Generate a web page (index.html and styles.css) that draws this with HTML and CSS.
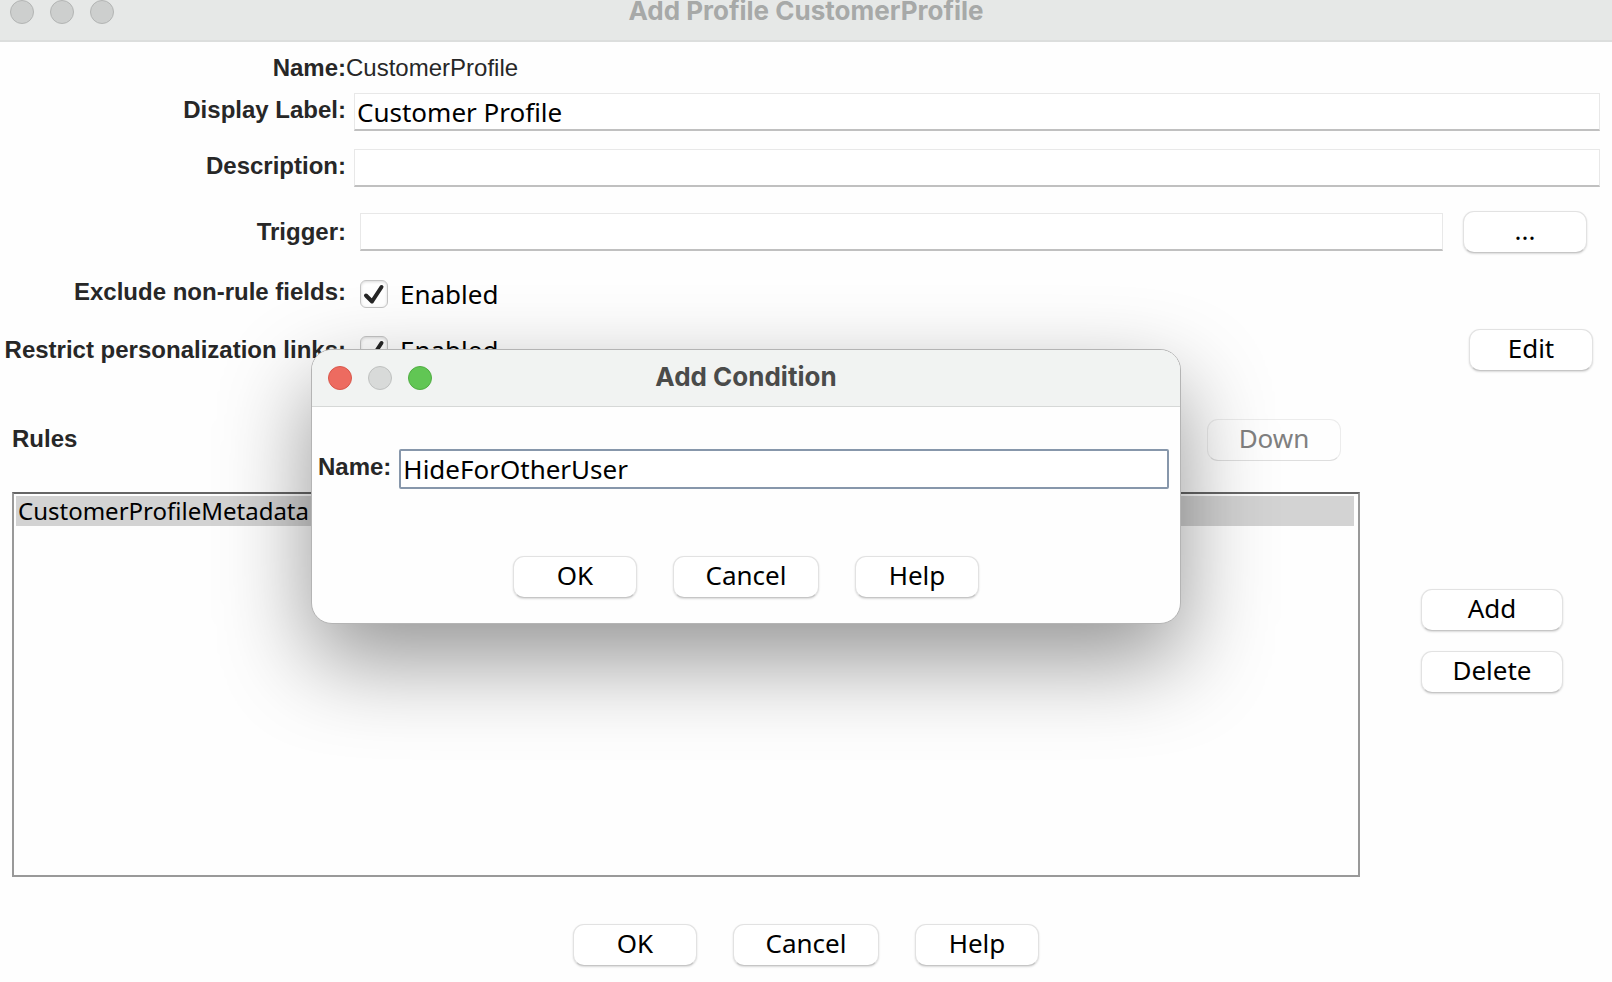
FILE: index.html
```html
<!DOCTYPE html>
<html lang="en">
<head>
<meta charset="utf-8">
<title>Add Profile CustomerProfile</title>
<link rel="stylesheet" href="styles.css">
</head>
<body>
<div class="window">
  <header class="titlebar titlebar-main">
    <div class="lights"><span class="light"></span><span class="light"></span><span class="light"></span></div>
    <h1 class="title">Add Profile CustomerProfile</h1>
  </header>

  <main class="content">
    <div class="row row-name">
      <span class="label">Name:</span><span class="value">CustomerProfile</span>
    </div>
    <div class="row row-display">
      <label class="label raised" for="display">Display Label:</label>
      <input class="field" id="display" type="text" value="Customer Profile">
    </div>
    <div class="row row-description">
      <label class="label raised" for="description">Description:</label>
      <input class="field" id="description" type="text">
    </div>
    <div class="row row-trigger">
      <label class="label" for="trigger">Trigger:</label>
      <input class="field" id="trigger" type="text">
      <button class="button" type="button">...</button>
    </div>
    <div class="row row-exclude">
      <span class="label raised">Exclude non-rule fields:</span>
      <label class="check"><span class="box"><input type="checkbox" checked><svg class="tick" viewBox="0 0 28 28"><path d="M6 15.500L12 21.500L21.500 7"/></svg></span>Enabled</label>
    </div>
    <div class="row row-restrict">
      <span class="label">Restrict personalization links:</span>
      <label class="check"><span class="box"><input type="checkbox" checked><svg class="tick" viewBox="0 0 28 28"><path d="M6 15.500L12 21.500L21.500 7"/></svg></span>Enabled</label>
      <button class="button push" type="button">Edit</button>
    </div>

    <div class="rules-head">
      <h2 class="rules-title">Rules</h2>
      <button class="button down" type="button" disabled>Down</button>
    </div>
    <div class="rules">
      <ul class="list"><li class="item">CustomerProfileMetadata</li></ul>
      <div class="side">
        <button class="button wide" type="button">Add</button>
        <button class="button wide" type="button">Delete</button>
      </div>
    </div>
    <div class="actions">
      <button class="button" type="button">OK</button>
      <button class="button wide" type="button">Cancel</button>
      <button class="button" type="button">Help</button>
    </div>
  </main>

  <section class="dialog" role="dialog" aria-labelledby="dialog-title">
    <header class="titlebar titlebar-dialog">
      <div class="lights"><span class="light light-close"></span><span class="light light-off"></span><span class="light light-zoom"></span></div>
      <h2 class="title" id="dialog-title">Add Condition</h2>
    </header>
    <div class="dialog-body">
      <div class="dialog-row">
        <label class="dialog-label" for="condition">Name:</label>
        <input class="field field-focus" id="condition" type="text" value="HideForOtherUser">
      </div>
      <div class="actions">
        <button class="button" type="button">OK</button>
        <button class="button wide" type="button">Cancel</button>
        <button class="button" type="button">Help</button>
      </div>
    </div>
  </section>
</div>
</body>
</html>
```

FILE: styles.css
```css
* { box-sizing: border-box; }

body {
  margin: 0;
  background: #fefefe;
  color: #000;
  font-family: "Noto Sans", sans-serif;
  font-size: 26px;
}

.window {
  position: relative;
  display: flex;
  flex-direction: column;
  min-height: 100vh;
}

/* Title bars */
.titlebar {
  display: grid;
  grid-template-columns: 1fr auto 1fr;
}

.titlebar-main {
  height: 42px;
  padding: 0 10px;
  border-bottom: 2px solid #dcdedd;
  background: #e6e8e7;
  color: #a7a9a8;
}

.titlebar-dialog {
  align-items: center;
  height: 57px;
  padding: 0 16px;
  border-bottom: 1px solid #d6d8d7;
  border-radius: 20px 20px 0 0;
  background: #f1f3f2;
  color: #4a4b4a;
}

.title {
  margin: 0;
  font-family: Inter, sans-serif;
  font-size: 26px;
  font-weight: 700;
  line-height: 22px;
}

.titlebar-dialog .title { padding-bottom: 2px; }

.lights {
  display: flex;
  gap: 16px;
}

.light {
  width: 24px;
  height: 24px;
  border: 1px solid #b3b5b4;
  border-radius: 50%;
  background: #cdcfce;
}

.light-close { border-color: #d9574b; background: #ed6b60; }
.light-off { border-color: #bfc1c0; background: #d8dad9; }
.light-zoom { border-color: #50ad42; background: #61c654; }

/* Form */
.content {
  display: flex;
  flex: 1;
  flex-direction: column;
  padding: 12px 12px 16px;
}

.row {
  display: flex;
  align-items: center;
}

.row-name { margin-bottom: 11px; }
.row-display { margin-bottom: 18px; }
.row-description { margin-bottom: 24px; }

.row-trigger {
  gap: 14px;
  height: 42px;
  margin-bottom: 20px;
  padding-right: 13px;
}

.row-trigger .button { margin-left: 6px; }

.row-exclude {
  gap: 14px;
  height: 42px;
  margin-bottom: 14px;
}

.row-restrict {
  gap: 14px;
  height: 42px;
  margin-bottom: 48px;
  padding-right: 7px;
}

.row-display,
.row-description { gap: 8px; }

.label,
.value,
.dialog-label,
.rules-title {
  color: #272727;
  font-family: "Liberation Sans", sans-serif;
  font-size: 24px;
  line-height: 28px;
  white-space: nowrap;
}

.label {
  display: flex;
  flex: none;
  justify-content: flex-end;
  width: 334px;
  font-weight: 700;
}

.raised { padding-bottom: 4px; }

.field {
  flex: 1;
  min-width: 0;
  height: 38px;
  padding: 0 2px;
  border: 1px solid #e8e8e8;
  border-bottom: 2px solid #c0c0c0;
  background: #fff;
  color: #000;
  font: inherit;
  outline: none;
}

.check {
  display: flex;
  align-items: center;
  gap: 12px;
}

.box {
  display: grid;
  width: 28px;
  height: 28px;
}

.box input,
.tick { grid-area: 1 / 1; }

.box input {
  width: 28px;
  height: 28px;
  margin: 0;
  border: 1px solid #c4c4c4;
  border-radius: 6px;
  appearance: none;
  background: #fff;
  box-shadow: inset 0 1px 3px rgba(0, 0, 0, 0.15);
}

.tick {
  fill: none;
  stroke: #262626;
  stroke-width: 4;
  stroke-linecap: round;
  stroke-linejoin: round;
  pointer-events: none;
}

.button {
  flex: none;
  width: 124px;
  height: 42px;
  padding: 0 0 4px;
  border: 1px solid #e2e2e2;
  border-bottom-color: #c6c6c6;
  border-radius: 11px;
  background: #fff;
  box-shadow: 0 1px 2px rgba(0, 0, 0, 0.15);
  color: #000;
  font: inherit;
  line-height: 36px;
}

.button:disabled {
  border-color: #ececec;
  border-bottom-color: #dedede;
  background: transparent;
  box-shadow: none;
  color: #808080;
}

.wide { width: 146px; }
.push { margin-left: auto; }

/* Rules */
.rules-head {
  display: flex;
  align-items: center;
  justify-content: space-between;
  margin-bottom: 31px;
  padding-right: 259px;
}

.rules-title {
  margin: 0;
  padding-bottom: 2px;
}

.down { width: 134px; }

.rules {
  display: flex;
  flex: 1;
  gap: 61px;
  margin-bottom: 47px;
  padding-right: 37px;
}

.list {
  flex: 1;
  margin: 0;
  padding: 2px 4px 2px 2px;
  border: 2px solid #999;
  border-top-color: #666;
  list-style: none;
}

.item {
  padding-left: 2px;
  background: #d3d3d3;
  font-size: 24px;
  line-height: 30px;
}

.side {
  display: flex;
  flex-direction: column;
  gap: 20px;
  padding-top: 97px;
}

.side .wide { width: 142px; }

.actions {
  display: flex;
  justify-content: center;
  gap: 36px;
}

/* Dialog floats over the profile window */
.dialog {
  position: absolute;
  top: 349px;
  right: 431px;
  left: 311px;
  border: 1px solid #b4b4b4;
  border-radius: 21px;
  background: #fefefe;
  box-shadow: 0 36px 90px rgba(0, 0, 0, 0.42);
}

.dialog-body { padding: 42px 11px 25px 6px; }

.dialog-row {
  display: flex;
  align-items: center;
  gap: 8px;
  margin-bottom: 67px;
}

.dialog-label {
  padding-bottom: 4px;
  font-weight: 700;
}

.dialog-body .actions { padding-left: 5px; }

.field-focus {
  height: 40px;
  border: 2px solid #8797ab;
  border-radius: 2px;
}
```
